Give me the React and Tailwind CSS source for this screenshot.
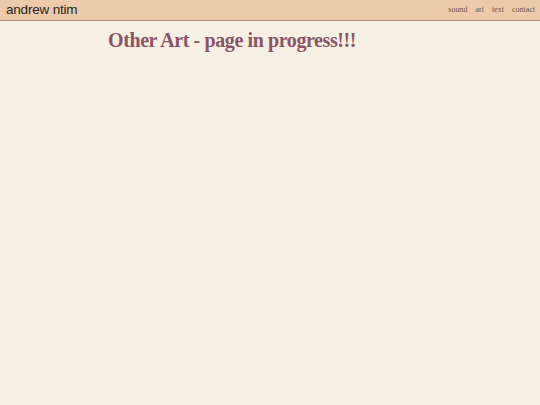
import React from "react";

const links = ["sound", "art", "text", "contact"];

export default function App() {
  return (
    <div className="min-h-screen bg-[#f6efe4]">
      <header className="h-[21px] flex items-center justify-between pl-[6px] pr-[5px] bg-[#edcaaa] border-b border-[#a88e80]">
        <span className="text-[13.5px] leading-none tracking-[-0.2px] text-[#2b1f1c] font-['Liberation_Sans',sans-serif]">
          andrew ntim
        </span>
        <nav className="flex gap-[8px] text-[8px] text-[#6e5450] font-['Liberation_Serif',serif]">
          {links.map((l) => (
            <span key={l}>{l}</span>
          ))}
        </nav>
      </header>
      <h1 className="pl-[108px] pt-[7px] text-[20px] font-bold leading-tight text-[#8b5564] font-['Liberation_Serif',serif] tracking-[-0.4px]">
        Other Art - page in progress!!!
      </h1>
    </div>
  );
}
